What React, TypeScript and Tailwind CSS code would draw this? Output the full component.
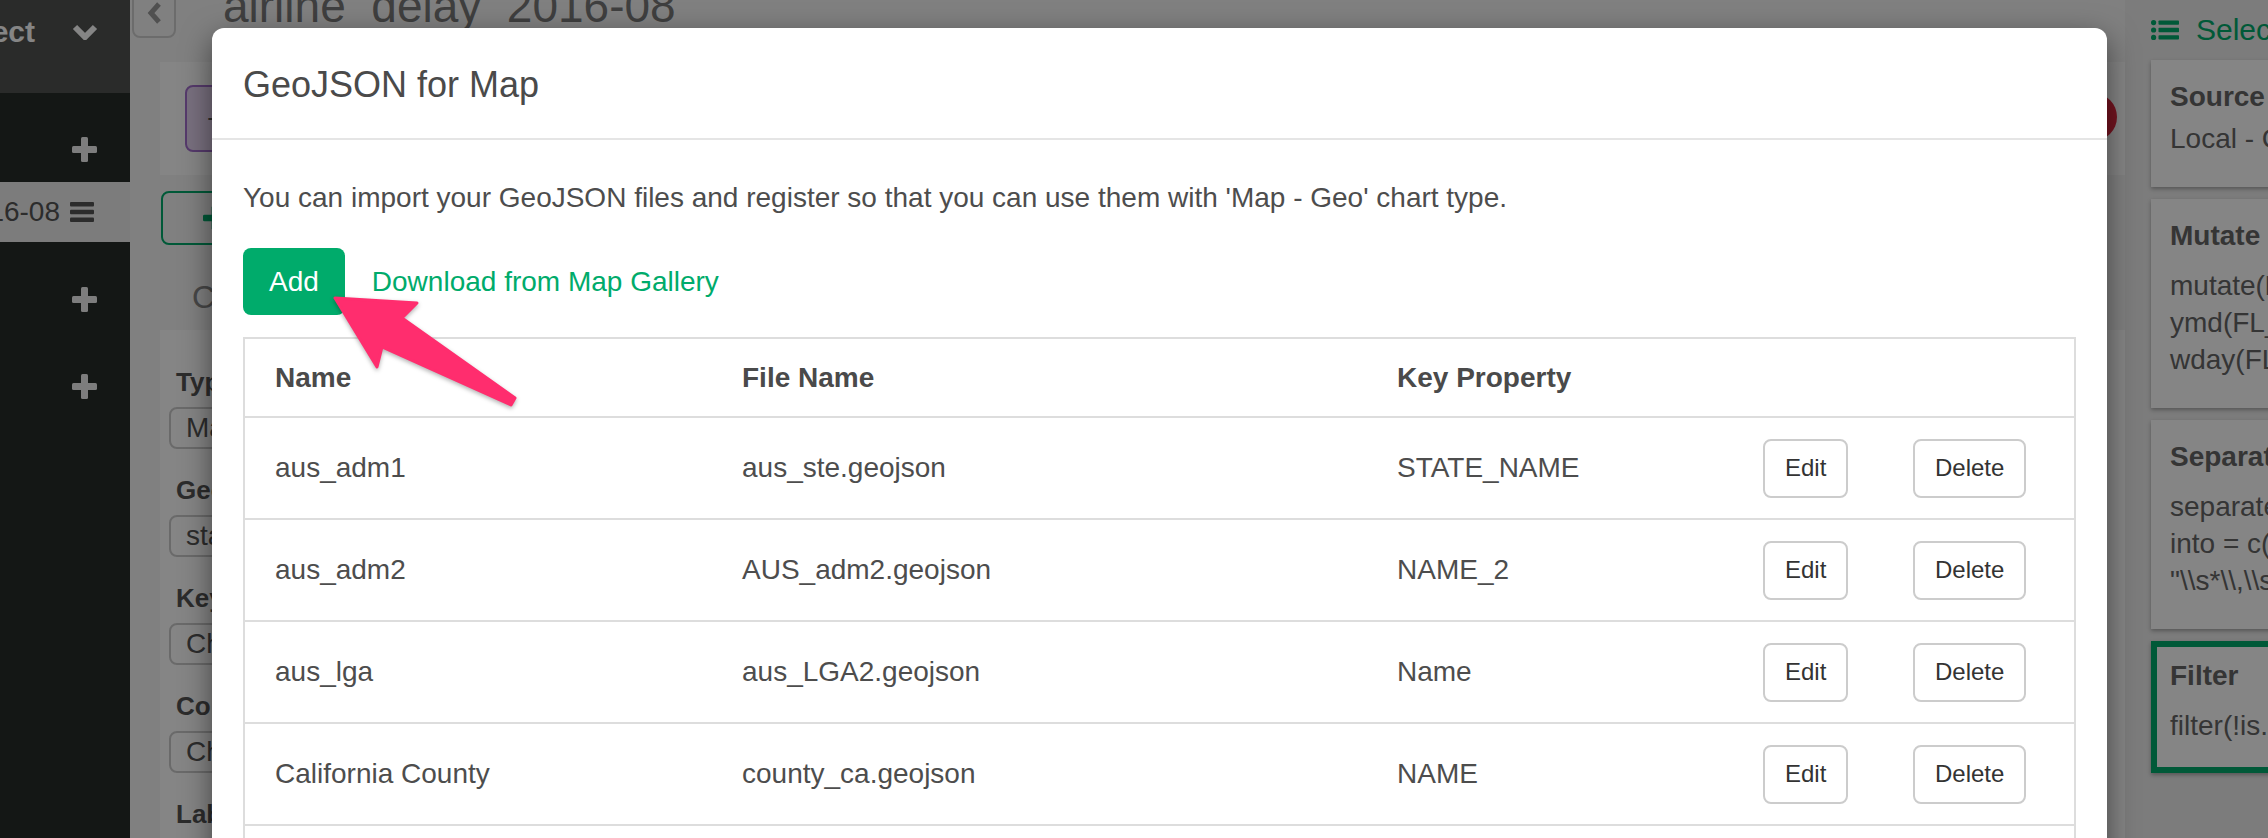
import React from 'react';

const Plus = ({ className }: { className?: string }) => (
  <svg viewBox="0 0 25 25" className={className} fill="currentColor">
    <rect x="9" y="0" width="7" height="25" rx="1.5" />
    <rect x="0" y="9" width="25" height="7" rx="1.5" />
  </svg>
);

const Bars = ({ className }: { className?: string }) => (
  <svg viewBox="0 0 24 20" className={className} fill="currentColor">
    <rect x="0" y="0" width="24" height="4.5" rx="1" />
    <rect x="0" y="7.7" width="24" height="4.5" rx="1" />
    <rect x="0" y="15.5" width="24" height="4.5" rx="1" />
  </svg>
);

const ListUl = ({ className }: { className?: string }) => (
  <svg viewBox="0 0 28 20" className={className} fill="currentColor">
    <circle cx="2.6" cy="2.6" r="2.6" />
    <circle cx="2.6" cy="10" r="2.6" />
    <circle cx="2.6" cy="17.4" r="2.6" />
    <rect x="7.5" y="0.4" width="20.5" height="4.4" rx="0.8" />
    <rect x="7.5" y="7.8" width="20.5" height="4.4" rx="0.8" />
    <rect x="7.5" y="15.2" width="20.5" height="4.4" rx="0.8" />
  </svg>
);

const rows = [
  { name: 'aus_adm1', file: 'aus_ste.geojson', key: 'STATE_NAME' },
  { name: 'aus_adm2', file: 'AUS_adm2.geojson', key: 'NAME_2' },
  { name: 'aus_lga', file: 'aus_LGA2.geojson', key: 'Name' },
  { name: 'California County', file: 'county_ca.geojson', key: 'NAME' },
];

const fields = [
  { label: 'Type', value: 'Map - Geo' },
  { label: 'GeoJSON', value: 'states' },
  { label: 'Key Property', value: 'Choose Column' },
  { label: 'Color By', value: 'Choose Column' },
  { label: 'Label', value: '' },
];

const cols = 'grid grid-cols-[467px_655px_366px_150px_191px]';

function Sidebar() {
  return (
    <aside className="w-[130px] shrink-0 flex flex-col bg-[#282c2a]">
      <div className="h-[93px] shrink-0 bg-[#515351]">
        <div className="h-[64px] flex items-center justify-end gap-[37px] pr-[32px] overflow-hidden text-white">
          <span className="text-[30px] leading-[30px] font-bold whitespace-nowrap">Select Project</span>
          <svg viewBox="0 0 26 16" className="w-[26px] h-[16px] shrink-0" fill="none" stroke="currentColor" strokeWidth="6">
            <path d="M3 3l10 10 10-10" />
          </svg>
        </div>
      </div>
      <div className="h-[89px] shrink-0 flex justify-end pr-[33px] pt-[44px] text-[#f0f0f0]">
        <Plus className="w-[25px] h-[25px]" />
      </div>
      <div className="h-[60px] shrink-0 bg-[#eeeeee] flex items-center justify-end gap-[10px] pr-[36px] overflow-hidden text-[#555]">
        <span className="text-[28px] leading-[40px] whitespace-nowrap">airline_delay_2016-08</span>
        <Bars className="w-[24px] h-[20px] shrink-0" />
      </div>
      <div className="shrink-0 flex justify-end pr-[33px] pt-[45px] text-[#f0f0f0]">
        <Plus className="w-[25px] h-[25px]" />
      </div>
      <div className="shrink-0 flex justify-end pr-[33px] pt-[62px] text-[#f0f0f0]">
        <Plus className="w-[25px] h-[25px]" />
      </div>
    </aside>
  );
}

function CenterColumn() {
  return (
    <div className="relative flex-1 flex flex-col min-w-0">
      <div className="h-[62px] shrink-0 flex items-start">
        <div className="ml-[2px] -mt-[12px] w-[44px] h-[50px] shrink-0 border-2 border-[#d0d0d0] rounded-[8px] flex items-center justify-center text-[#999]">
          <svg viewBox="0 0 15 22" className="w-[15px] h-[22px]" fill="none" stroke="currentColor" strokeWidth="5">
            <path d="M12 2L4 11l8 9" />
          </svg>
        </div>
        <h1 className="ml-[47px] -mt-[17px] text-[46px] leading-[46px] text-[#7a7a7a] whitespace-nowrap">airline_delay_2016-08</h1>
      </div>
      <div className="pl-[30px] flex flex-col flex-1">
        <div className="h-[113px] shrink-0 bg-white pl-[25px] pt-[23px]">
          <div className="h-[67px] w-[320px] border-2 border-[#a56fd0] bg-[#e8d6f4] rounded-[8px] flex items-center pl-[20px] text-[28px] text-[#555]">
            + Add Step
          </div>
        </div>
        <div className="mt-[16px] ml-[1px] h-[54px] shrink-0 w-[420px] border-2 border-[#00ab6b] rounded-[8px] flex items-center pl-[40px] text-[#00ab6b]">
          <Plus className="w-[24px] h-[24px]" />
        </div>
        <div className="mt-[32px] ml-[32px] shrink-0 text-[32px] leading-[40px] text-[#888]">Chart</div>
        <div className="mt-[13px] shrink-0 bg-white pl-[9px] pt-[32px]">
          {fields.map((f) => (
            <div key={f.label} className="mb-[21px]">
              <div className="pl-[7px] text-[26px] leading-[40px] font-bold text-[#555]">{f.label}</div>
              <div className="mt-[5px] h-[42px] w-[600px] border-2 border-[#cccccc] rounded-[8px] pl-[15px] flex items-center text-[28px] text-[#555]">
                {f.value}
              </div>
            </div>
          ))}
        </div>
      </div>
      <div className="absolute right-[8px] top-[93px] w-[48px] h-[48px] rounded-full bg-[#e0283f]" />
    </div>
  );
}

function StepCard({ title, lines, first, active }: { title: string; lines: React.ReactNode[]; first?: boolean; active?: boolean }) {
  return (
    <div
      className={
        active
          ? 'w-[320px] shrink-0 bg-white border-[6px] border-[#00ab6b] pl-[13px] pt-[9px] pb-[23px] shadow-[0_2px_4px_rgba(0,0,0,0.3)]'
          : 'w-[320px] shrink-0 bg-white pl-[19px] pt-[17px] pb-[30px] shadow-[0_2px_4px_rgba(0,0,0,0.3)]'
      }
    >
      <div className={first ? 'text-[28px] leading-[40px] font-bold text-[#666] mb-[3px]' : 'text-[28px] leading-[40px] font-bold text-[#666] mb-[11px]'}>
        {title}
      </div>
      {lines.map((l, i) => (
        <div key={i} className="text-[28px] leading-[37px] text-[#666] whitespace-nowrap">
          {l}
        </div>
      ))}
    </div>
  );
}

function StepsPanel() {
  return (
    <div className="w-[143px] shrink-0 bg-[#ededed] pl-[26px] overflow-hidden flex flex-col">
      <div className="h-[60px] shrink-0 flex items-center gap-[17px] text-[#00ab6b]">
        <ListUl className="w-[28px] h-[20px] shrink-0" />
        <span className="text-[30px] leading-[40px] whitespace-nowrap">Select</span>
      </div>
      <div className="flex flex-col gap-[12px]">
        <StepCard first title="Source" lines={['Local - CSV']} />
        <StepCard
          title="Mutate"
          lines={[
            <span key="a">mutate(<b>FL_DATE</b> =</span>,
            'ymd(FL_DATE),',
            'wday(FL_DATE)',
          ]}
        />
        <StepCard title="Separate" lines={['separate(DEST,', 'into = c(', '"\\\\s*\\\\,\\\\s*"']} />
        <StepCard active title="Filter" lines={['filter(!is.na(x))']} />
      </div>
    </div>
  );
}

function GeoJsonModal() {
  return (
    <div className="absolute left-[212px] top-[28px] w-[1895px] h-[900px] bg-white rounded-[12px] shadow-[0_10px_30px_rgba(0,0,0,0.5)] text-[#4d4d4d] overflow-hidden">
      <div className="h-[112px] pl-[31px] pt-[39px] border-b-2 border-[#e5e5e5]">
        <h4 className="text-[36px] leading-[36px] text-[#4a4a4a]">GeoJSON for Map</h4>
      </div>
      <div className="px-[31px] pt-[38px]">
        <p className="text-[28px] leading-[40px]">
          You can import your GeoJSON files and register so that you can use them with 'Map - Geo' chart type.
        </p>
        <div className="mt-[30px] flex items-center gap-[27px]">
          <button className="h-[67px] px-[26px] rounded-[8px] bg-[#00ab6b] text-white text-[28px] leading-[40px]">Add</button>
          <a className="text-[#00ab6b] text-[28px] leading-[40px]">Download from Map Gallery</a>
        </div>
        <div className="mt-[22px] border-2 border-b-0 border-[#dddddd]">
          <div className={`${cols} h-[79px] border-b-2 border-[#dddddd] items-center text-[28px] leading-[40px] font-bold text-[#4a4a4a]`}>
            <div className="pl-[30px]">Name</div>
            <div className="pl-[30px]">File Name</div>
            <div className="pl-[30px]">Key Property</div>
            <div />
            <div />
          </div>
          {rows.map((r) => (
            <div key={r.name} className={`${cols} h-[102px] border-b-2 border-[#dddddd] items-center text-[28px] leading-[40px]`}>
              <div className="pl-[30px] whitespace-nowrap">{r.name}</div>
              <div className="pl-[30px] whitespace-nowrap">{r.file}</div>
              <div className="pl-[30px] whitespace-nowrap">{r.key}</div>
              <div className="pl-[30px]">
                <button className="h-[59px] px-[20px] border-2 border-[#cccccc] rounded-[8px] bg-white text-[24px] text-[#333]">Edit</button>
              </div>
              <div className="pl-[30px]">
                <button className="h-[59px] px-[20px] border-2 border-[#cccccc] rounded-[8px] bg-white text-[24px] text-[#333]">Delete</button>
              </div>
            </div>
          ))}
          <div className="h-[102px]" />
        </div>
      </div>
    </div>
  );
}

export default function App() {
  return (
    <div className="relative w-[2268px] h-[838px] overflow-hidden flex bg-[#f6f6f6] font-['Liberation_Sans',Arial,sans-serif]">
      <Sidebar />
      <CenterColumn />
      <StepsPanel />
      <div className="absolute inset-0 bg-black/[0.48]" />
      <GeoJsonModal />
      <svg className="absolute left-0 top-0 w-[2268px] h-[838px] pointer-events-none drop-shadow-[0_2px_2px_rgba(0,0,0,0.3)]" viewBox="0 0 2268 838">
        <polygon
          points="335,298 417,303 402,318 515,398 511,405 382,347 377,367"
          fill="#ff2d6e"
          stroke="#ff2d6e"
          strokeWidth="3"
          strokeLinejoin="round"
        />
      </svg>
    </div>
  );
}
